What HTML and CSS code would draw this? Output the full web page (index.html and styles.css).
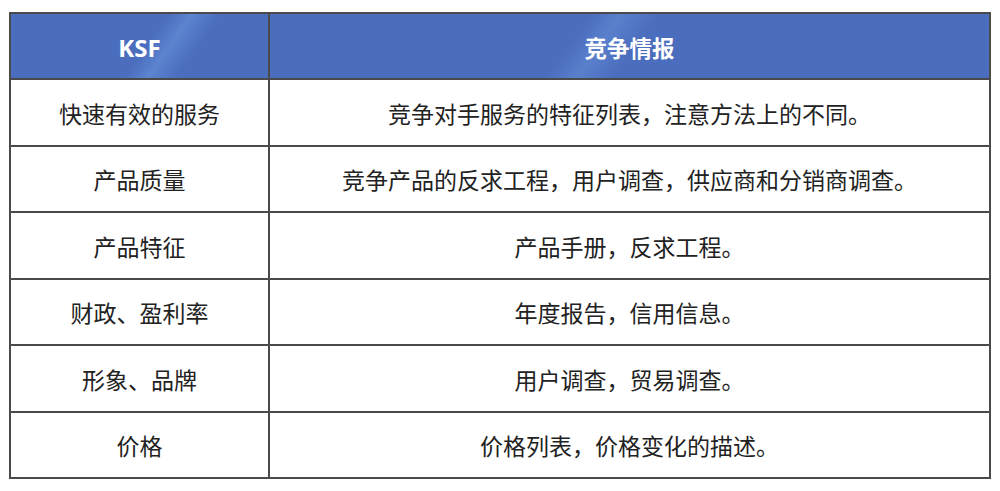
FILE: index.html
```html
<!DOCTYPE html>
<html lang="zh-CN">
<head>
<meta charset="utf-8">
<title>KSF 竞争情报</title>
<link rel="stylesheet" href="styles.css">
</head>
<body>
<table class="ksf-table">
  <colgroup>
    <col class="col-ksf">
    <col class="col-info">
  </colgroup>
  <thead>
    <tr class="head-row">
      <th class="head-cell head-ksf">KSF</th>
      <th class="head-cell head-info">竞争情报</th>
    </tr>
  </thead>
  <tbody>
    <tr class="body-row"><td class="cell">快速有效的服务</td><td class="cell">竞争对手服务的特征列表，注意方法上的不同。</td></tr>
    <tr class="body-row"><td class="cell">产品质量</td><td class="cell">竞争产品的反求工程，用户调查，供应商和分销商调查。</td></tr>
    <tr class="body-row"><td class="cell">产品特征</td><td class="cell">产品手册，反求工程。</td></tr>
    <tr class="body-row"><td class="cell">财政、盈利率</td><td class="cell">年度报告，信用信息。</td></tr>
    <tr class="body-row"><td class="cell">形象、品牌</td><td class="cell">用户调查，贸易调查。</td></tr>
    <tr class="body-row"><td class="cell">价格</td><td class="cell">价格列表，价格变化的描述。</td></tr>
  </tbody>
</table>
</body>
</html>
```
FILE: styles.css
```css
html, body {
  background: #ffffff;
}
body {
  margin: 0;
  padding: 12px 0 0 9px;
  font-family: "Noto Sans CJK SC", "Noto Sans", sans-serif;
  color: #222222;
}
.ksf-table {
  border-collapse: collapse;
  width: 980px;
  table-layout: fixed;
  border: 2px solid #4a4a4a;
}
.col-ksf { width: 259px; }
.col-info { width: 721px; }
.head-row {
  height: 66px;
  background: #4a6dbd;
}
.head-cell {
  border: 2px solid #4a4a4a;
  color: #ffffff;
  font-size: 22.5px;
  font-weight: 700;
  text-align: center;
  vertical-align: middle;
  padding: 2px 0 0 0;
}
.head-ksf {
  font-family: "Open Sans", "Noto Sans", sans-serif;
  font-size: 24px;
  background: linear-gradient(125deg, #4a6dbd 0%, #4a6dbd 52%, #5c84cf 60%, #4a6dbd 70%, #4a6dbd 100%);
}
.head-info {
  background: linear-gradient(125deg, #4a6dbd 0%, #4a6dbd 42%, #5a80cc 46%, #4a6dbd 51%, #4a6dbd 100%);
}
.body-row {
  height: 66.5px;
}
.cell {
  border: 2px solid #4a4a4a;
  font-size: 23px;
  text-align: center;
  vertical-align: middle;
  padding: 3px 0 0 0;
  line-height: 1.3;
}
```
